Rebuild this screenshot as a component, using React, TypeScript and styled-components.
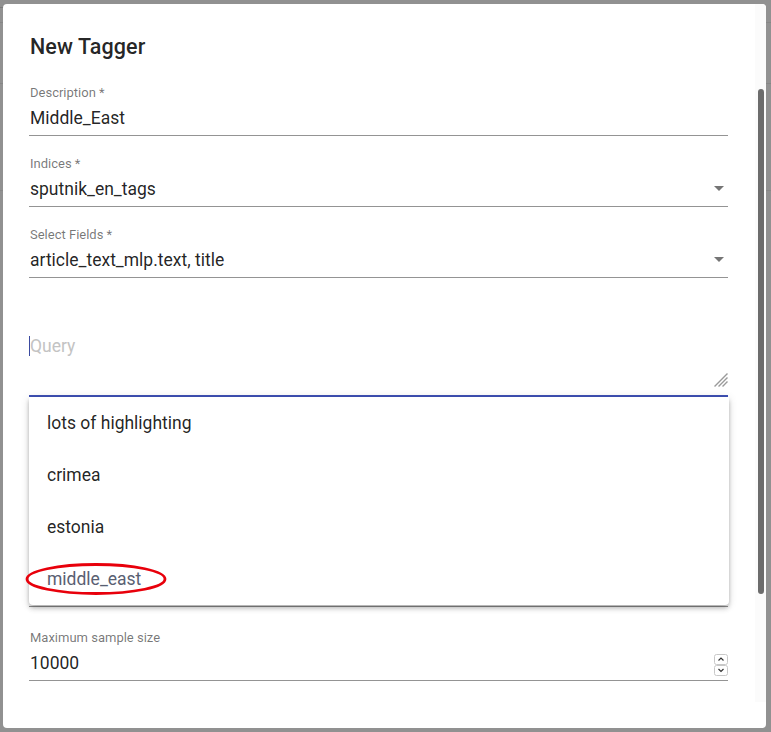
import React from "react";
import styled, { createGlobalStyle } from "styled-components";

const Global = createGlobalStyle`
  html, body { margin: 0; padding: 0; }
  body {
    font-family: Roboto, "Noto Sans", "Liberation Sans", sans-serif;
    background-color: #919191;
    background-image:
      linear-gradient(#7b7b7b, #7b7b7b),
      linear-gradient(#868686, #868686),
      linear-gradient(#868686, #868686),
      linear-gradient(#888888, #888888);
    background-repeat: no-repeat;
    background-size: 92px 1px, 771px 1px, 771px 1px, 771px 1px;
    background-position: 0 7px, 0 22px, 0 83px, 0 190px;
  }
  * { box-sizing: border-box; }
`;

const Page = styled.div`
  width: 771px;
  height: 732px;
  padding: 4px 5px 4px 3px;
`;

const Dialog = styled.div`
  position: relative;
  height: 724px;
  background: #ffffff;
  border-radius: 4px;
  overflow: hidden;
  padding: 27px 38px 0 26px;
  display: flex;
  flex-direction: column;
`;

const Title = styled.h2`
  margin: 0 0 22px 1px;
  font-size: 21.5px;
  line-height: 32px;
  font-weight: 500;
  color: rgba(0, 0, 0, 0.87);
  letter-spacing: 0.1px;
`;

const Form = styled.div`
  display: flex;
  flex-direction: column;
  gap: 20px;
`;

const Field = styled.div<{ $focused?: boolean; $mt?: number; $mb?: number }>`
  position: relative;
  display: flex;
  flex-direction: column;
  padding-bottom: ${(p) => (p.$focused ? 7 : 5)}px;
  border-bottom: ${(p) => (p.$focused ? "2px solid #3f51b5" : "1px solid #949494")};
  margin-top: ${(p) => p.$mt ?? 0}px;
  margin-bottom: ${(p) => p.$mb ?? 0}px;
`;

const Label = styled.div`
  height: 15px;
  font-size: 13px;
  line-height: 15px;
  color: rgba(0, 0, 0, 0.54);
  margin-bottom: 6px;
  padding-left: 1px;
`;

const ValueRow = styled.div`
  display: flex;
  align-items: center;
  height: 24px;
  font-size: 17.5px;
  line-height: 24px;
  color: rgba(0, 0, 0, 0.87);
  padding-left: 1px;
`;

const Value = styled.span`
  flex: 1;
  white-space: nowrap;
`;

const Arrow = styled.span`
  width: 0;
  height: 0;
  border-left: 5px solid transparent;
  border-right: 5px solid transparent;
  border-top: 5px solid #757575;
  margin-right: 4px;
  margin-top: -1px;
`;

const Spinner = styled.svg`
  margin-top: 4px;
`;

const AreaWrap = styled.div`
  position: relative;
  margin-top: 16px;
`;

const Area = styled.textarea`
  display: block;
  width: 100%;
  height: 53px;
  border: none;
  outline: none;
  padding: 0 0 0 1px;
  margin: 0;
  resize: none;
  font-family: Roboto, "Noto Sans", "Liberation Sans", sans-serif;
  font-size: 17.5px;
  line-height: 22px;
  color: rgba(0, 0, 0, 0.87);
  background: transparent;
  &::placeholder { color: #c3c3c3; }
`;

const Resizer = styled.svg`
  position: absolute;
  right: 0;
  bottom: 1px;
  pointer-events: none;
`;

const Caret = styled.span`
  position: absolute;
  left: 0;
  top: 1px;
  width: 1px;
  height: 20px;
  background: #3b4aa0;
`;

const Panel = styled.div`
  position: absolute;
  left: 26px;
  top: 393px;
  width: 700px;
  background: #ffffff;
  border-radius: 0 0 4px 4px;
  box-shadow: 0 2px 4px -1px rgba(0, 0, 0, 0.2), 0 4px 5px 0 rgba(0, 0, 0, 0.14),
    0 1px 10px 0 rgba(0, 0, 0, 0.12);
  display: flex;
  flex-direction: column;
`;

const Option = styled.div<{ $muted?: boolean }>`
  position: relative;
  height: 52px;
  display: flex;
  align-items: center;
  padding-left: 18px;
  font-size: 17.5px;
  color: ${(p) => (p.$muted ? "#596072" : "rgba(0, 0, 0, 0.87)")};
`;

const Circle = styled.svg`
  position: absolute;
  left: -5px;
  top: 9px;
  pointer-events: none;
`;

const Track = styled.div`
  position: absolute;
  right: 0;
  top: 0;
  width: 11px;
  height: 698px;
  background: #fbfbfb;
`;

const Thumb = styled.div`
  position: absolute;
  left: 755px;
  top: 85px;
  width: 6px;
  height: 505px;
  background: #6c6c6c;
  border-radius: 3px;
`;

const SelectField = ({ label, value }: { label: string; value: string }) => (
  <Field>
    <Label>{label}</Label>
    <ValueRow>
      <Value>{value}</Value>
      <Arrow />
    </ValueRow>
  </Field>
);

export default function App() {
  return (
    <>
      <Global />
      <Page>
        <Dialog>
          <Track />
          <Title>New Tagger</Title>
          <Form>
            <Field>
              <Label>Description *</Label>
              <ValueRow>
                <Value>Middle_East</Value>
              </ValueRow>
            </Field>
            <SelectField label="Indices *" value="sputnik_en_tags" />
            <SelectField label="Select Fields *" value="article_text_mlp.text, title" />
            <Field $focused $mb={-3}>
              <Label />
              <AreaWrap>
                <Caret />
                <Area placeholder="Query" />
                <Resizer width="14" height="14" viewBox="0 0 14 14">
                  <g stroke="#9a9a9a" strokeWidth="1.3" strokeLinecap="square">
                    <line x1="13" y1="1" x2="1" y2="13" />
                    <line x1="13" y1="5" x2="5" y2="13" />
                    <line x1="13" y1="9" x2="9" y2="13" />
                  </g>
                </Resizer>
              </AreaWrap>
            </Field>
            <SelectField label="" value="" />
            <SelectField label="" value="" />
            <SelectField label="" value="" />
            <Field $mt={3}>
              <Label>Maximum sample size</Label>
              <ValueRow>
                <Value>10000</Value>
                <Spinner width="14" height="22" viewBox="0 0 14 22">
                  <rect x="0.5" y="0.5" width="13" height="10" rx="2" fill="#fff" stroke="#c8c8c8" />
                  <rect x="0.5" y="11.5" width="13" height="10" rx="2" fill="#fff" stroke="#c8c8c8" />
                  <path d="M4.5 6.5 L7 4 L9.5 6.5" fill="none" stroke="#333" strokeWidth="1.2" />
                  <path d="M4.5 15 L7 17.5 L9.5 15" fill="none" stroke="#333" strokeWidth="1.2" />
                </Spinner>
              </ValueRow>
            </Field>
          </Form>
          <Panel>
            <Option>lots of highlighting</Option>
            <Option>crimea</Option>
            <Option>estonia</Option>
            <Option $muted>
              middle_east
              <Circle width="144" height="34" viewBox="0 0 144 34">
                <ellipse cx="72" cy="17" rx="69" ry="14.5" fill="none" stroke="#e8000b" strokeWidth="2.8" />
              </Circle>
            </Option>
          </Panel>
          <Thumb />
        </Dialog>
      </Page>
    </>
  );
}
